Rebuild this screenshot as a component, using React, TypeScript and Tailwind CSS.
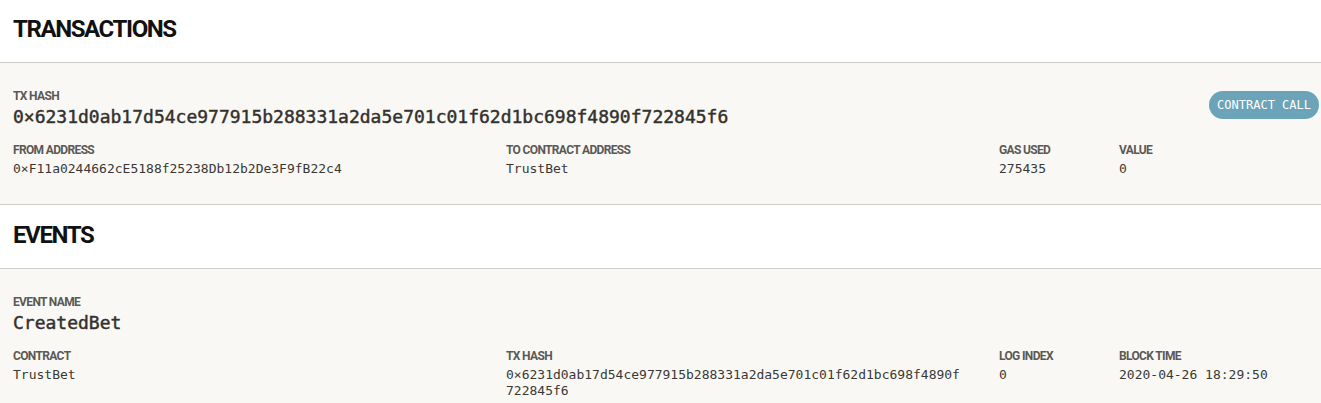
import React from "react";

const mono = "font-['DejaVu_Sans_Mono',monospace]";
const cond = "font-['Roboto',sans-serif]";

function Label({ children }: { children: React.ReactNode }) {
  return (
    <div className={`${cond} text-[12px] leading-4 font-bold uppercase tracking-[-0.65px] text-[#5b5955]`}>
      {children}
    </div>
  );
}

function Field({ label, value, className }: { label: string; value: string; className?: string }) {
  return (
    <div className={className}>
      <Label>{label}</Label>
      <div className={`${mono} text-[13px] leading-4 text-[#3a3835] mt-[3px] break-all`}>{value}</div>
    </div>
  );
}

function Heading({ children, h }: { children: React.ReactNode; h: string }) {
  return (
    <div className={`${h} flex items-center px-[13px] border-b border-[#cfcdc8] bg-white`}>
      <h1 className={`${cond} text-[24px] font-bold uppercase text-[#111] tracking-[-1.4px] mt-[-4px]`}>{children}</h1>
    </div>
  );
}

const big = `${mono} text-[18px] leading-6 text-[#33312d] [-webkit-text-stroke:0.45px_#33312d] mt-[1px]`;

export default function App() {
  return (
    <div className="w-[1321px] h-[403px] overflow-hidden bg-white">
      <Heading h="h-[63px]">Transactions</Heading>
      <section className="bg-[#f9f8f5] border-b border-[#cfcdc8] px-[13px] pt-[25px] h-[142px]">
        <div className="flex justify-between">
          <div>
            <Label>Tx Hash</Label>
            <div className={big}>0×6231d0ab17d54ce977915b288331a2da5e701c01f62d1bc698f4890f722845f6</div>
          </div>
          <span className={`${mono} h-[28px] px-[8px] mt-[3px] mr-[-11px] rounded-full bg-[#6ba3b8] text-white text-[12px] flex items-center`}>
            CONTRACT CALL
          </span>
        </div>
        <div className="flex mt-[13px]">
          <Field className="w-[493px]" label="From Address" value="0×F11a0244662cE5188f25238Db12b2De3F9fB22c4" />
          <Field className="w-[493px]" label="To Contract Address" value="TrustBet" />
          <Field className="w-[120px]" label="Gas Used" value="275435" />
          <Field label="Value" value="0" />
        </div>
      </section>
      <Heading h="h-[64px]">Events</Heading>
      <section className="bg-[#f9f8f5] px-[13px] pt-[25px] pb-6">
        <Label>Event Name</Label>
        <div className={big}>CreatedBet</div>
        <div className="flex mt-[13px]">
          <Field className="w-[493px]" label="Contract" value="TrustBet" />
          <Field className="w-[493px] pr-[34px]" label="Tx Hash" value="0×6231d0ab17d54ce977915b288331a2da5e701c01f62d1bc698f4890f722845f6" />
          <Field className="w-[120px]" label="Log Index" value="0" />
          <Field label="Block Time" value="2020-04-26 18:29:50" />
        </div>
      </section>
    </div>
  );
}
